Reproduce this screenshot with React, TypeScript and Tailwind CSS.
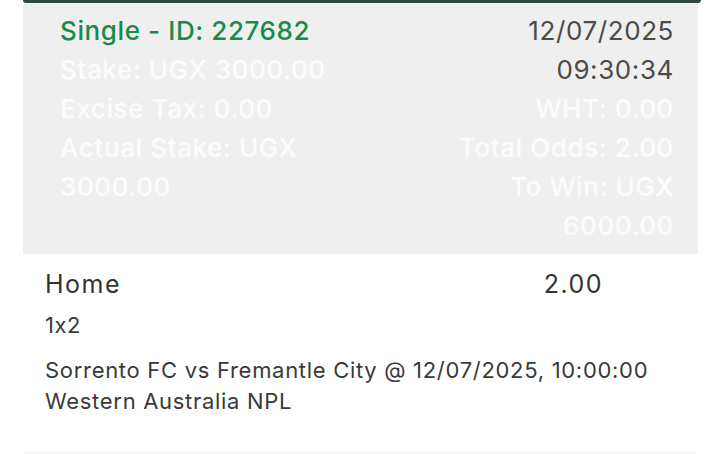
export default function App() {
  return (
    <div className="w-[720px] h-[454px] bg-white overflow-hidden relative [font-feature-settings:'calt'_0]" style={{ fontFamily: "Inter, 'Open Sans', sans-serif" }}>
      {/* top edge of previous card */}
      <div className="absolute top-0 left-[23px] w-[678px] h-[3px] bg-[#2f4843] rounded-b-[6px]" />

      {/* bet summary */}
      <div className="ml-[23px] mt-[3px] w-[675px] h-[251px] bg-[#efefef] pl-[37px] pr-[24px] pt-[8px] flex justify-between text-[26px] leading-[39px] tracking-[0.6px]">
        <div className="flex flex-col">
          <span className="text-[#188a4a] font-medium">Single - ID: 227682</span>
          <span className="text-[#fbfbfb] font-medium">Stake: UGX 3000.00</span>
          <span className="text-[#fbfbfb] font-medium">Excise Tax: 0.00</span>
          <span className="text-[#fbfbfb] font-medium">
            Actual Stake: UGX
            <br />
            3000.00
          </span>
        </div>
        <div className="flex flex-col items-end text-right">
          <span className="text-[#4b4b4b]">12/07/2025</span>
          <span className="text-[#4b4b4b]">09:30:34</span>
          <span className="text-[#fbfbfb] font-medium">WHT: 0.00</span>
          <span className="text-[#fbfbfb] font-medium">Total Odds: 2.00</span>
          <span className="text-[#fbfbfb] font-medium">
            To Win: UGX
            <br />
            6000.00
          </span>
        </div>
      </div>

      {/* selection */}
      <div className="pl-[45px] pt-[13px] text-[#333333]">
        <div className="w-[558px] flex justify-between text-[25px] leading-[34px] tracking-[1.5px]">
          <span>Home</span>
          <span>2.00</span>
        </div>
        <div className="mt-[9px] text-[22px] leading-[30px] text-[#3a3a3a] tracking-[0.5px]">1x2</div>
        <div className="mt-[15px] text-[22px] leading-[31px] text-[#3a3a3a] tracking-[0.7px]">
          <div>Sorrento FC vs Fremantle City @ 12/07/2025, 10:00:00</div>
          <div>Western Australia NPL</div>
        </div>
      </div>

      <div className="absolute left-[23px] right-[23px] bottom-[1px] h-px bg-[#eef8f8]" />
    </div>
  );
}
